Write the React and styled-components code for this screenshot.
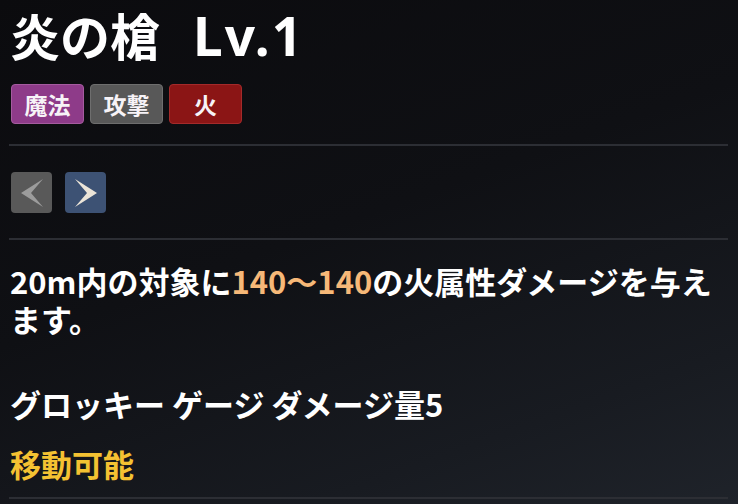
import styled, { createGlobalStyle } from 'styled-components'

const GlobalStyle = createGlobalStyle`
  html, body {
    margin: 0;
    padding: 0;
    background: #0c0c0f;
  }
  body {
    font-family: 'Noto Sans CJK JP', 'Noto Sans', sans-serif;
  }
`

const Panel = styled.div`
  width: 738px;
  height: 504px;
  box-sizing: border-box;
  padding: 0 10px 0 9px;
  overflow: hidden;
  background: linear-gradient(160deg, #0b0b0e 0%, #0f1014 45%, #181b21 80%, #1f232a 100%);
  color: #fff;
`

const Title = styled.h1`
  display: flex;
  align-items: baseline;
  margin: 0;
  padding-top: 1px;
  padding-left: 1px;
  font-size: 50px;
  font-weight: 700;
  line-height: 67px;
`

const Level = styled.span`
  margin-left: 33px;
  font-family: 'Noto Sans', sans-serif;
  font-size: 53px;
  letter-spacing: 2px;
`

const Tags = styled.div`
  display: flex;
  gap: 6px;
  margin-top: 15px;
  padding-left: 2px;
`

const tagColors = {
  magic: ['#8e3b89', '#a55b9f'],
  attack: ['#585858', '#6e6e6e'],
  fire: ['#8b1515', '#a42a2a'],
}

const Tag = styled.div`
  width: 73px;
  height: 40px;
  box-sizing: border-box;
  display: flex;
  align-items: center;
  justify-content: center;
  border-radius: 4px;
  background: ${(p) => tagColors[p.$kind][0]};
  border: 1.5px solid ${(p) => tagColors[p.$kind][1]};
  font-size: 23px;
  font-weight: 700;
  color: #f7f3f7;
`

const Divider = styled.div`
  height: 2px;
  background: #2c2e34;
  margin-top: ${(p) => p.$top}px;
`

const Nav = styled.div`
  display: flex;
  gap: 13px;
  margin-top: 26px;
  padding-left: 2px;
`

const NavButton = styled.div`
  width: 41px;
  height: 41px;
  border-radius: 4px;
  display: flex;
  align-items: center;
  justify-content: center;
  background: ${(p) => (p.$active ? '#3d5274' : '#595959')};
`

const Desc = styled.p`
  margin: 22px 0 0;
  padding-left: 1px;
  font-size: 31px;
  font-weight: 700;
  line-height: 38px;
`

const Num = styled.span`
  color: #f6b878;
`

const Line = styled.p`
  margin: ${(p) => p.$top}px 0 0;
  padding-left: 1px;
  font-size: 31px;
  font-weight: 700;
  line-height: 38px;
  color: ${(p) => p.$color || '#fff'};
`

const Arrow = ({ dir, color }) => (
  <svg width="24" height="30" viewBox="0 0 24 30">
    {dir === 'left' ? (
      <path d="M23 1 L1 15 L23 29 L11 15 Z" fill={color} />
    ) : (
      <path d="M1 1 L23 15 L1 29 L13 15 Z" fill={color} />
    )}
  </svg>
)

export default function App() {
  return (
    <>
      <GlobalStyle />
      <Panel>
        <Title>
          炎の槍<Level>Lv.1</Level>
        </Title>
        <Tags>
          <Tag $kind="magic">魔法</Tag>
          <Tag $kind="attack">攻撃</Tag>
          <Tag $kind="fire">火</Tag>
        </Tags>
        <Divider $top={20} />
        <Nav>
          <NavButton>
            <Arrow dir="left" color="#9c9c9c" />
          </NavButton>
          <NavButton $active>
            <Arrow dir="right" color="#ebe4d8" />
          </NavButton>
        </Nav>
        <Divider $top={25} />
        <Desc>
          20m内の対象に<Num>140〜140</Num>の火属性ダメージを与えます。
        </Desc>
        <Line $top={47}>グロッキー ゲージ ダメージ量5</Line>
        <Line $top={22} $color="#f4c232">移動可能</Line>
        <Divider $top={14} />
      </Panel>
    </>
  )
}
